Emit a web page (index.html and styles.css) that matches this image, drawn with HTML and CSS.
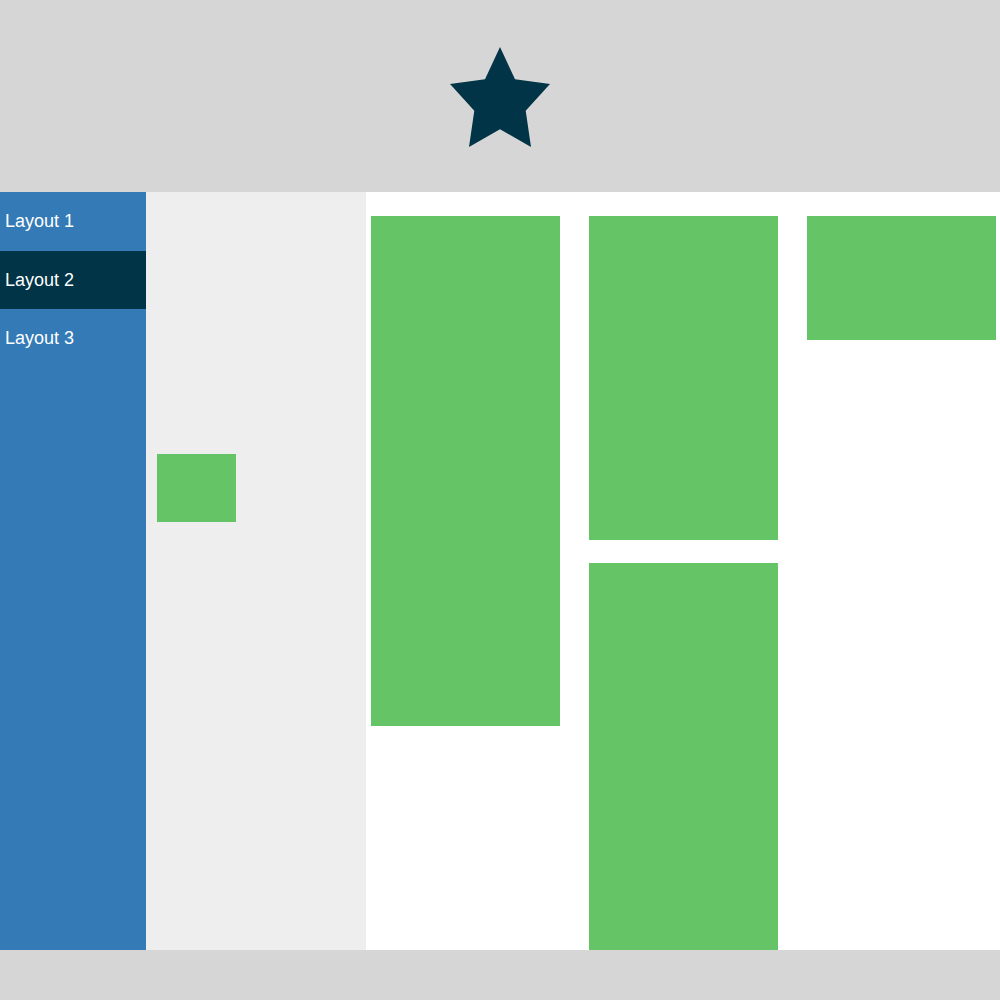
FILE: index.html
```html
<!DOCTYPE html>
<html>
<head>
<meta charset="utf-8">
<link rel="stylesheet" href="styles.css">
</head>
<body>
<header class="top">
  <svg class="star" width="100" height="100" viewBox="0 0 100 100">
    <polygon points="50,0 65,32.3 100,37 75.7,63.7 81,100 50,82.3 19,100 24.3,63.7 0,37 35,32.3" fill="#003446"/>
  </svg>
</header>
<main class="main">
  <nav class="side">
    <div class="item">Layout 1</div>
    <div class="item active">Layout 2</div>
    <div class="item">Layout 3</div>
  </nav>
  <section class="panel">
    <div class="box small"></div>
  </section>
  <section class="content">
    <div class="col">
      <div class="box h510"></div>
    </div>
    <div class="col">
      <div class="box h324"></div>
      <div class="box h500"></div>
    </div>
    <div class="col">
      <div class="box h124"></div>
    </div>
  </section>
</main>
<footer class="bottom"></footer>
</body>
</html>
```
FILE: styles.css
```css
html, body {
  margin: 0;
  padding: 0;
}
body {
  width: 1000px;
  height: 1000px;
  font-family: "Liberation Sans", Arial, sans-serif;
  background: #d6d6d6;
  overflow: hidden;
}
.top {
  height: 192px;
  background: #d6d6d6;
  display: flex;
  justify-content: center;
  align-items: flex-start;
  padding-top: 47px;
  box-sizing: border-box;
}
.star {
  display: block;
}
.main {
  height: 758px;
  display: grid;
  grid-template-columns: 146px 220px 1fr;
  overflow: hidden;
}
.side {
  background: #337ab7;
}
.item {
  height: 58.5px;
  line-height: 58px;
  padding-left: 5px;
  color: #ffffff;
  font-size: 18px;
}
.item.active {
  background: #003446;
}
.panel {
  background: #eeeeee;
  padding: 262px 0 0 11px;
}
.box {
  background: #65c466;
}
.small {
  width: 79px;
  height: 68px;
}
.content {
  background: #ffffff;
  display: flex;
  gap: 29px;
  padding: 24px 4px 0 5px;
  align-items: flex-start;
}
.col {
  width: 189px;
  display: flex;
  flex-direction: column;
  gap: 23px;
}
.h510 { height: 510px; }
.h324 { height: 324px; }
.h500 { height: 500px; }
.h124 { height: 124px; }
.bottom {
  height: 50px;
  background: #d6d6d6;
}
```
